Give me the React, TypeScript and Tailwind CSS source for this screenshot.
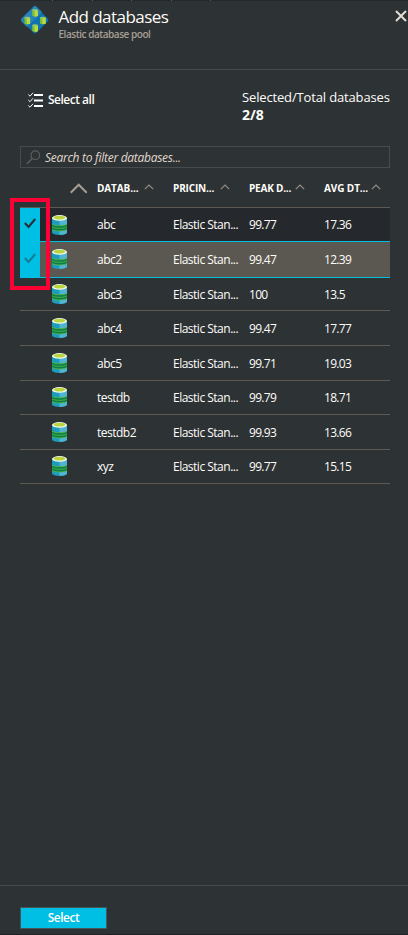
import React from 'react';

type Row = { name: string; peak: string; avg: string; box: string; pad: string; state?: 'selected' | 'hover' };

const rows: Row[] = [
  { name: 'abc', peak: '99.77', avg: '17.36', box: 'h-[34px]', pad: 'pt-[6px]', state: 'selected' },
  { name: 'abc2', peak: '99.47', avg: '12.39', box: 'h-[36px]', pad: 'pt-[7px]', state: 'hover' },
  { name: 'abc3', peak: '100', avg: '13.5', box: 'h-[33px]', pad: 'pt-[6px]' },
  { name: 'abc4', peak: '99.47', avg: '17.77', box: 'h-[35px]', pad: 'pt-[7px]' },
  { name: 'abc5', peak: '99.71', avg: '19.03', box: 'h-[35px]', pad: 'pt-[7px]' },
  { name: 'testdb', peak: '99.79', avg: '18.71', box: 'h-[34px]', pad: 'pt-[6px]' },
  { name: 'testdb2', peak: '99.93', avg: '13.66', box: 'h-[35px]', pad: 'pt-[7px]' },
  { name: 'xyz', peak: '99.77', avg: '15.15', box: 'h-[34px]', pad: 'pt-[6px]' },
];

const headers = [
  { label: 'DATAB...', width: 'w-[76px]', text: 'w-[47px] tracking-[-0.1px]' },
  { label: 'PRICIN...', width: 'w-[76px]', text: 'w-[47px] tracking-[-0.15px]' },
  { label: 'PEAK D...', width: 'w-[75px]', text: 'w-[46px] tracking-[-0.2px]' },
  { label: 'AVG DT...', width: 'w-[66px]', text: 'w-[47px] tracking-[-0.1px]' },
];

function PoolIcon() {
  const cans = [[12.2, 4], [4.4, 11.6], [20, 11.6], [12.2, 19.2]];
  return (
    <svg width="30" height="30" viewBox="0 0 30 30" className="shrink-0">
      <rect x="5" y="5" width="20" height="20" rx="2" fill="#1272ae" transform="rotate(45 15 15)" />
      <path d="M13.6 1.500Q15 .2 16.400 1.500L22 7 7 22 1.500 16.400Q.2 15 1.500 13.600Z" fill="#2583bd" />
      {cans.map(([x, y]) => (
        <g key={`${x}-${y}`} transform={`translate(${x} ${y})`}>
          <path d="M0 1.200V6.600C0 7.900 5.700 7.900 5.700 6.600V1.200Z" fill="#79bd3c" />
          <path d="M2.400 1.200V7.500C4 7.600 5.700 7.400 5.700 6.600V1.200Z" fill="#b9dc45" />
          <ellipse cx="2.850" cy="1.200" rx="2.850" ry="1.100" fill="#9cc765" />
        </g>
      ))}
    </svg>
  );
}

function DatabaseIcon() {
  return (
    <svg width="15" height="20" viewBox="0 0 15 20" className="shrink-0">
      <path d="M0 3v14.300C0 20.800 15 20.800 15 17.300V3z" fill="#1c9dbd" />
      <path d="M7.500 3v16.900c4 0 7.500-.8 7.500-2.600V3z" fill="#50b5d2" />
      <path d="M0 9v5.400c2.500 2.200 12.500 2.200 15 0V9c-2.500 2-12.500 2-15 0z" fill="#0a8148" />
      <path d="M0 9.300c2.500 1.900 12.500 1.900 15 0M0 11.900c2.500 1.900 12.500 1.900 15 0M0 14.500c2.500 1.900 12.500 1.900 15 0" stroke="#5fb848" strokeWidth=".8" fill="none" />
      <ellipse cx="7.500" cy="2.900" rx="7.500" ry="2.800" fill="#f8faf2" />
      <ellipse cx="7.500" cy="2.600" rx="6" ry="1.900" fill="#b8d43e" />
    </svg>
  );
}

function Caret({ large = false }: { large?: boolean }) {
  return large ? (
    <svg width="18" height="11" viewBox="0 0 18 11" fill="none" stroke="#a79e93" strokeWidth="2">
      <path d="M.7 9.700 8.700 1.700l8 8" />
    </svg>
  ) : (
    <svg width="10" height="6" viewBox="0 0 10 6" fill="none" stroke="#969087" strokeWidth="1.100">
      <path d="M.8 5.200 5 1l4.200 4.200" />
    </svg>
  );
}

function Check({ color }: { color: string }) {
  return (
    <svg width="12" height="11" viewBox="0 0 12 11" fill="none" stroke={color} strokeWidth="2.100">
      <path d="M.8 5 4.600 9 11.200 1" />
    </svg>
  );
}

export default function App() {
  return (
    <div className="relative flex h-[935px] w-[408px] flex-col overflow-hidden border-b border-[#202427] bg-[#2d3235] font-['Open_Sans','Noto_Sans',sans-serif] text-[#fffdf9]">
      <div className="flex h-px shrink-0 gap-[38.500px] bg-[#25292c] pl-[52px]">
        {[0, 1, 2, 3, 4].map((tick) => (
          <i key={tick} className="h-px w-px bg-[#5a5d5e]" />
        ))}
      </div>
      <header className="flex h-[69px] shrink-0 items-start border-b border-[#464a4c] pl-[20px] pt-[4px]">
        <PoolIcon />
        <div className="ml-[8.500px] mt-[1px] grow whitespace-nowrap">
          <h1 className="text-[17px] font-normal leading-[21px] tracking-[-0.55px]">Add databases</h1>
          <p className="mt-px text-[10px] font-semibold leading-[13px] tracking-[-0.46px] text-[#a89f94]">Elastic database pool</p>
        </div>
        <svg className="mr-[1.500px] mt-[5px]" width="12" height="12" viewBox="0 0 12 12" fill="none" stroke="#e4dcd2" strokeWidth="2">
          <path d="M1 1l10 10M11 1 1 11" />
        </svg>
      </header>

      <section className="flex h-[76px] shrink-0 items-start justify-between whitespace-nowrap pl-[28px] pr-[18px]">
        <button className="mt-[20px] flex h-[20px] items-center gap-[5px] text-[12px] font-semibold tracking-[-0.5px]">
          <svg width="15" height="16" viewBox="0 0 15 16" fill="none" stroke="#fff">
            <path d="M6 3h9M6 8.500h9M6 14h9" strokeWidth="2" />
            <path d="M.3 2.500 2 4.200 5 .8M.3 8 2 9.700 5 6.300M.3 13.500 2 15.200 5 11.800" strokeWidth="1" />
          </svg>
          Select all
        </button>
        <div className="mt-[18px] w-[148px]">
          <div className="text-[13px] leading-[18px] tracking-[-0.15px]">Selected/Total databases</div>
          <div className="text-[14px] font-bold leading-[18px]">2/8</div>
        </div>
      </section>

      <div className="ml-[20px] flex h-[22px] w-[370px] shrink-0 items-center border border-[#484b4d] pl-[5px]">
        <svg width="15" height="15" viewBox="0 0 15 15" fill="none" stroke="#5c5e5e">
          <circle cx="9.300" cy="5.200" r="4.300" strokeWidth="1.200" />
          <path d="M6.300 8.500 .8 14" strokeWidth="1.500" />
        </svg>
        <span className="ml-[4px] mt-[2px] whitespace-nowrap text-[12px] italic leading-[20px] tracking-[-0.28px] text-[#e0d8cd]">Search to filter databases...</span>
      </div>

      <main className="ml-[20px] w-[370px]">
        <div className="flex h-[40px] items-start border-b border-[#5b5952] pl-[50px] pt-[12px]">
          <div className="mt-[3px] w-[27px]"><Caret large /></div>
          {headers.map((h) => (
            <div key={h.label} className={`flex shrink-0 items-start ${h.width}`}>
              <span className={`whitespace-nowrap text-[10px] font-bold leading-[16px] ${h.text}`}>{h.label}</span>
              <span className="mt-[4px]"><Caret /></span>
            </div>
          ))}
        </div>
        {rows.map((row) => (
          <div key={row.name} className={`flex ${row.box}`}>
            <div className={`flex w-[20px] shrink-0 items-start justify-center ${row.state === 'hover' ? 'pt-[11px]' : 'pt-[10px]'} ${row.state ? 'bg-[#00bfe5]' : 'border-b border-[#5b5952]'}`}>
              {row.state && <Check color={row.state === 'selected' ? '#263238' : '#137f91'} />}
            </div>
            <div className={`flex w-[350px] items-start border-b text-[12px] leading-[20px] ${row.pad} ${row.state === 'selected' ? 'border-[#00bfe5] bg-[#25292d]' : row.state === 'hover' ? 'border-[#00bfe5] bg-[#5b5851]' : 'border-[#5b5952]'}`}>
              <div className={`w-[57px] shrink-0 pl-[12px] ${row.state === 'selected' ? 'pt-px' : ''}`}><DatabaseIcon /></div>
              <div className="mt-px w-[76px] shrink-0 tracking-[-0.5px]">{row.name}</div>
              <div className="mt-px w-[76px] shrink-0 whitespace-nowrap tracking-[-0.5px]">Elastic Stan...</div>
              <div className="mt-px w-[75px] shrink-0 tracking-[-0.7px]">{row.peak}</div>
              <div className="mt-px tracking-[-0.7px]">{row.avg}</div>
            </div>
          </div>
        ))}
      </main>

      <footer className="mt-auto h-[49px] shrink-0 border-t border-[#464a4c] pl-[20px] pt-[21px]">
        <button className="flex h-[22px] w-[87px] items-center justify-center border border-[#46555a] bg-[#00bfe5] text-[12px] font-semibold tracking-[-0.5px]">Select</button>
      </footer>

      <div className="absolute left-[10px] top-[198px] h-[92px] w-[40px] border-4 border-[#ff0034]" />
    </div>
  );
}
